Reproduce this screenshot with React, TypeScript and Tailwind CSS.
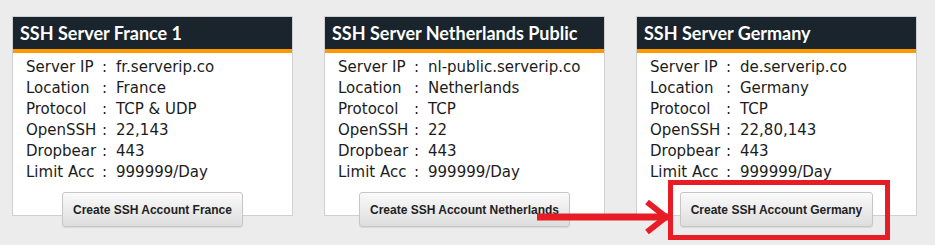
const servers = [
  {
    title: "SSH Server France 1",
    ip: "fr.serverip.co",
    location: "France",
    protocol: "TCP & UDP",
    openssh: "22,143",
    button: "Create SSH Account France",
  },
  {
    title: "SSH Server Netherlands Public",
    ip: "nl-public.serverip.co",
    location: "Netherlands",
    protocol: "TCP",
    openssh: "22",
    button: "Create SSH Account Netherlands",
  },
  {
    title: "SSH Server Germany",
    ip: "de.serverip.co",
    location: "Germany",
    protocol: "TCP",
    openssh: "22,80,143",
    button: "Create SSH Account Germany",
  },
];

type Server = (typeof servers)[number];

function ServerCard({ s }: { s: Server }) {
  const rows: [string, string][] = [
    ["Server IP", s.ip],
    ["Location", s.location],
    ["Protocol", s.protocol],
    ["OpenSSH", s.openssh],
    ["Dropbear", "443"],
    ["Limit Acc", "999999/Day"],
  ];

  return (
    <div className="w-[281px] bg-white border border-[#d0d0d0] flex flex-col">
      {/* header */}
      <div className="h-[36px] bg-[#1a242d] border-b-[4px] border-[#ff9900] px-[7px] flex items-center">
        <span className="whitespace-nowrap text-[18px] font-bold text-white leading-none font-['Lato',sans-serif]">
          {s.title}
        </span>
      </div>

      {/* details */}
      <div className="pt-[4px] pl-[13px] font-['DejaVu_Sans',sans-serif] text-[15px] leading-[21px] text-[#1c1c1c]">
        {rows.map(([label, value]) => (
          <div key={label} className="flex">
            <span className="w-[76px] shrink-0">{label}</span>
            <span className="w-[14px] shrink-0">:</span>
            <span>{value}</span>
          </div>
        ))}
      </div>

      {/* action */}
      <div className="flex justify-center mt-[9px] -mb-[12px]">
        <button className="h-[35px] px-[10px] rounded-[3px] border border-[#c6c6c6] bg-gradient-to-b from-[#fafafa] to-[#dedede] shadow-[0_1px_1px_rgba(0,0,0,0.08)] text-[12px] font-bold text-[#222] font-['Liberation_Sans',Arial,sans-serif]">
          {s.button}
        </button>
      </div>
    </div>
  );
}

export default function App() {
  return (
    <div className="relative w-[935px] h-[245px] bg-[#ececec] overflow-hidden">
      <div className="flex gap-[31px] pl-[12px] pt-[16px]">
        {servers.map((s) => (
          <ServerCard key={s.title} s={s} />
        ))}
      </div>

      {/* red annotation: arrow + box around the Germany button */}
      <svg
        className="absolute inset-0 pointer-events-none"
        width="935"
        height="245"
        viewBox="0 0 935 245"
      >
        <rect x="670.5" y="182.5" width="217" height="55" fill="none" stroke="#e81c24" strokeWidth="5" />
        <line x1="537" y1="217" x2="668" y2="217" stroke="#e81c24" strokeWidth="7" />
        <polyline points="647,202 666,217 647,232" fill="none" stroke="#e81c24" strokeWidth="6" />
      </svg>
    </div>
  );
}
